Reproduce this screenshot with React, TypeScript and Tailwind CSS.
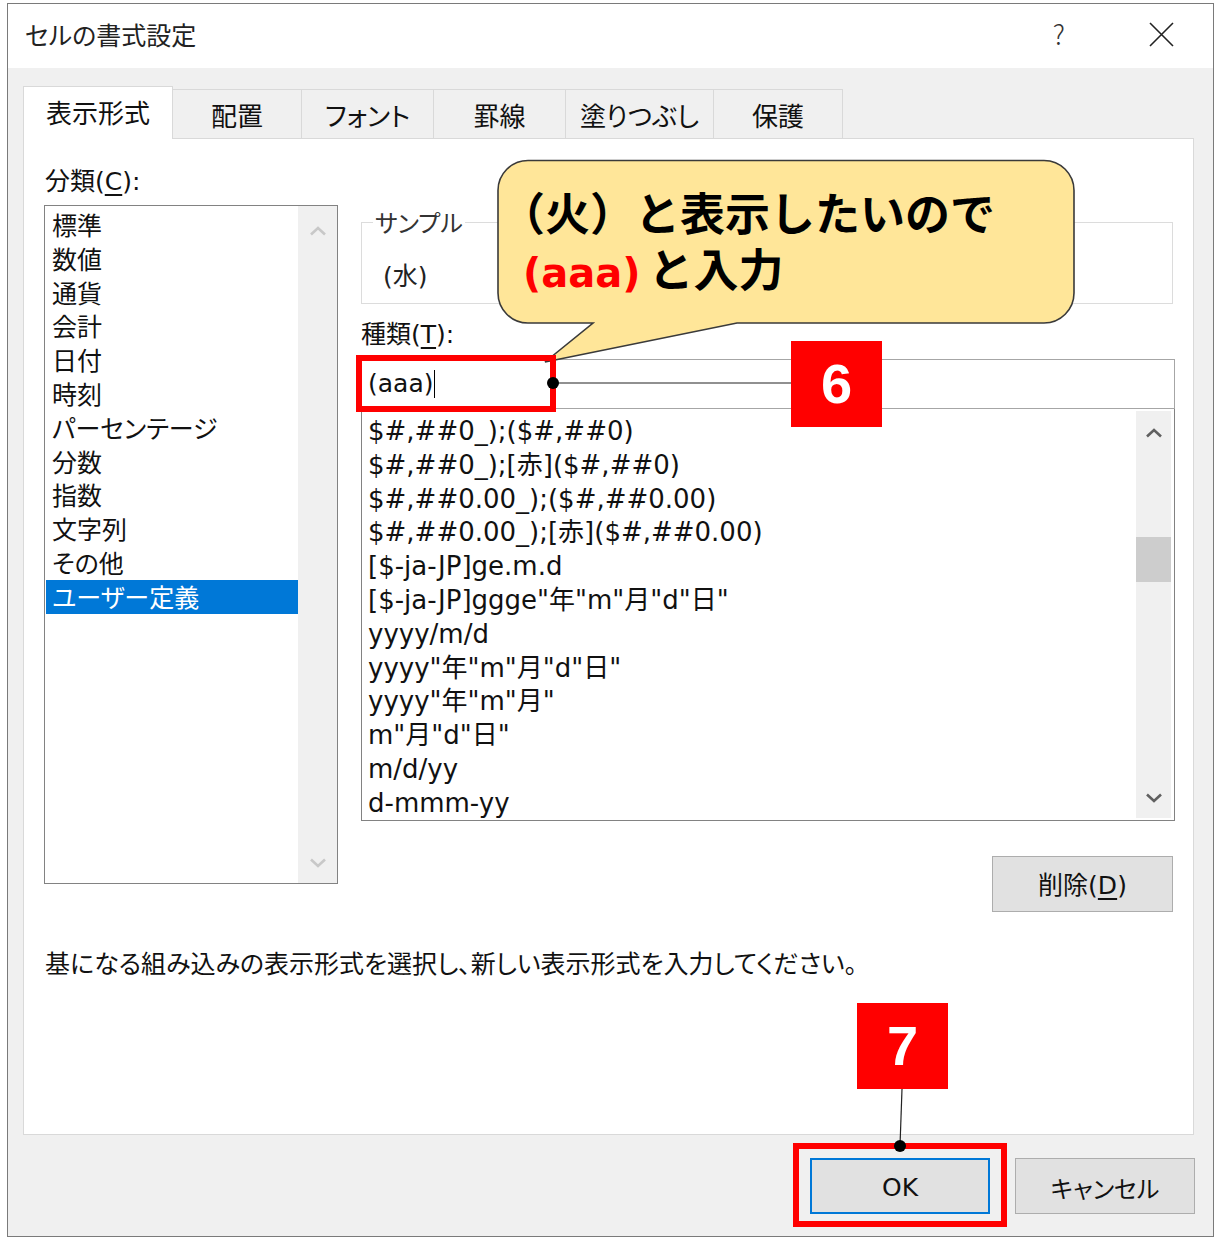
import React from "react";

const categories = ["標準", "数値", "通貨", "会計", "日付", "時刻", "パーセンテージ", "分数", "指数", "文字列", "その他", "ユーザー定義"];

const formats = [
  "$#,##0_);($#,##0)",
  "$#,##0_);[赤]($#,##0)",
  "$#,##0.00_);($#,##0.00)",
  "$#,##0.00_);[赤]($#,##0.00)",
  "[$-ja-JP]ge.m.d",
  '[$-ja-JP]ggge"年"m"月"d"日"',
  "yyyy/m/d",
  'yyyy"年"m"月"d"日"',
  'yyyy"年"m"月"',
  'm"月"d"日"',
  "m/d/yy",
  "d-mmm-yy",
];

const tabs = ["表示形式", "配置", "フォント", "罫線", "塗りつぶし", "保護"];
const tabWidths = ["w-[150px]", "w-[129px]", "w-[132px]", "w-[132px]", "w-[148px]", "w-[129px]"];

function Chevron({ up, color }: { up?: boolean; color: string }) {
  return (
    <svg width="18" height="10" viewBox="0 0 18 10">
      <path d={up ? "M2 8.5 L9 2 L16 8.5" : "M2 1.5 L9 8 L16 1.5"} fill="none" stroke={color} strokeWidth="2.6" />
    </svg>
  );
}

export default function App() {
  return (
    <div className="relative w-[1215px] h-[1240px] bg-white overflow-hidden text-[#111] font-['DejaVu_Sans','Noto_Sans_CJK_JP',sans-serif] [font-feature-settings:'palt']">
      <div className="ml-[7px] mt-[3px] w-[1207px] h-[1234px] border border-[#7a7a7a] bg-[#f0f0f0] flex flex-col">
        {/* Title bar */}
        <div className="h-[64px] bg-white flex items-center justify-between pl-[17px] pr-[39px] pb-[3px]">
          <span className="text-[25px] font-['Noto_Sans_CJK_JP',sans-serif] text-[#222]">セルの書式設定</span>
          <div className="flex items-center gap-[84px]">
            <span className="text-[27px] font-['Noto_Sans_CJK_JP',sans-serif] font-light text-[#333]">?</span>
            <svg width="25" height="25" viewBox="0 0 25 25">
              <path d="M1 1 L24 24 M24 1 L1 24" stroke="#222" strokeWidth="1.6" />
            </svg>
          </div>
        </div>

        {/* Body */}
        <div className="flex-1 pl-[15px] pr-[19px]">
          <div className="mt-[18px] flex items-end -mb-px relative z-10">
            {tabs.map((t, i) => (
              <div
                key={t}
                className={`${tabWidths[i]} flex items-center justify-center text-[26px] font-['Noto_Sans_CJK_JP',sans-serif] border-t border-r border-[#d9d9d9] ${
                  i === 0 ? "h-[53px] bg-white border-l pb-[3px]" : "h-[50px] bg-[#f0f0f0] border-b"
                }`}
              >
                {t}
              </div>
            ))}
          </div>

          {/* Panel */}
          <div className="h-[997px] border border-[#d9d9d9] bg-white pl-[20px]">
            <div className="flex">
              {/* Left column */}
              <div className="w-[294px]">
                <div className="mt-[26px] pl-[1px] leading-[34px] text-[25px]">
                  分類(<span className="underline underline-offset-4">C</span>):
                </div>
                <div className="mt-[6px] h-[679px] border border-[#828282] flex">
                  <div className="flex-1 pt-[2px] text-[25px] font-['Noto_Sans_CJK_JP',sans-serif]">
                    {categories.map((c) => (
                      <div
                        key={c}
                        className={`leading-[33.8px] ml-[1px] pl-[6px] ${c === "ユーザー定義" ? "bg-[#0078d7] text-white" : ""}`}
                      >
                        {c}
                      </div>
                    ))}
                  </div>
                  <div className="w-[39px] bg-[#f0f0f0] flex flex-col items-center justify-between pt-[20px] pb-[15px]">
                    <Chevron up color="#c8c8c8" />
                    <Chevron color="#c8c8c8" />
                  </div>
                </div>
              </div>

              {/* Right column */}
              <div className="ml-[23px] w-[814px] flex flex-col">
                <fieldset className="mt-[68px] w-[812px] border border-[#dcdcdc] p-0">
                  <legend className="ml-[11px] px-[2px] leading-[30px] text-[24px] font-['Noto_Sans_CJK_JP',sans-serif] text-[#333]">サンプル</legend>
                  <div className="h-[66px] pt-[23px] pl-[21px] leading-[34px] text-[25px] text-[#222]">(水)</div>
                </fieldset>

                <div className="mt-[14px] leading-[34px] text-[25px]">
                  種類(<span className="underline underline-offset-4">T</span>):
                </div>
                <div className="mt-[7px] h-[50px] border border-[#a6a6a6] flex items-center pl-[6px] text-[25px]">
                  <span>(aaa)</span>
                  <span className="ml-[1px] w-px h-[28px] bg-black" />
                </div>
                <div className="h-[412px] border border-t-0 border-[#828282] flex overflow-hidden">
                  <div className="flex-1 pt-[6px] pl-[6px] text-[26px] whitespace-nowrap">
                    {formats.map((f) => (
                      <div key={f} className="leading-[33.8px]">{f}</div>
                    ))}
                  </div>
                  <div className="w-[35px] mr-[3px] my-[2px] bg-[#f0f0f0] flex flex-col">
                    <div className="h-[44px] flex items-center justify-center">
                      <Chevron up color="#606060" />
                    </div>
                    <div className="h-[82px]" />
                    <div className="h-[45px] bg-[#cdcdcd]" />
                    <div className="flex-1" />
                    <div className="h-[40px] flex items-center justify-center">
                      <Chevron color="#606060" />
                    </div>
                  </div>
                </div>

                <div className="mt-[35px] self-end mr-[2px] w-[181px] h-[56px] bg-[#e1e1e1] border border-[#adadad] flex items-center justify-center pt-[3px] text-[25px]">
                  削除(<span className="underline underline-offset-4">D</span>)
                </div>
              </div>
            </div>

            <div className="mt-[33px] pl-[1px] leading-[34px] text-[25px] font-['Noto_Sans_CJK_JP',sans-serif]">
              基になる組み込みの表示形式を選択し、新しい表示形式を入力してください。
            </div>
          </div>

          {/* Buttons */}
          <div className="mt-[23px] -mr-px flex justify-end gap-[25px]">
            <div className="w-[180px] h-[56px] bg-[#e1e1e1] border-2 border-[#0078d7] flex items-center justify-center pt-[3px] text-[25px]">OK</div>
            <div className="w-[180px] h-[56px] bg-[#e1e1e1] border border-[#adadad] flex items-center justify-center pt-[3px] text-[24px] font-['Noto_Sans_CJK_JP',sans-serif]">キャンセル</div>
          </div>
        </div>
      </div>

      {/* Callout */}
      <svg className="absolute left-[496px] top-[159px]" width="582" height="206" viewBox="0 0 582 206">
        <path
          d="M32 1.5 H548 A30 30 0 0 1 578 31.5 V134 A30 30 0 0 1 548 164 H241 L49 203 L97 164 H32 A30 30 0 0 1 2 134 V31.5 A30 30 0 0 1 32 1.5 Z"
          fill="#ffe699"
          stroke="#3a3a3a"
          strokeWidth="1.6"
        />
      </svg>
      <div className="absolute left-[500px] top-[184px] leading-[56px] text-[45px] font-bold font-['Noto_Sans_CJK_JP',sans-serif] [font-feature-settings:normal] text-black">
        <div>（火）と表示したいので</div>
        <div className="flex items-baseline">
          <span className="ml-[23px] text-[#ff0000] font-['DejaVu_Sans',sans-serif] text-[40px]">(aaa)</span>
          <span className="ml-[8px]">と入力</span>
        </div>
      </div>

      {/* Red highlights */}
      <div className="absolute left-[356px] top-[355px] w-[200px] h-[57px] border-[6px] border-[#ff0000]" />
      <div className="absolute left-[793px] top-[1143px] w-[214px] h-[84px] border-[6px] border-[#ff0000]" />

      {/* Connectors */}
      <svg className="absolute left-0 top-0 pointer-events-none" width="1215" height="1240">
        <line x1="553" y1="383" x2="792" y2="383" stroke="#222" strokeWidth="1.2" />
        <circle cx="553" cy="383" r="6" fill="#000" />
        <line x1="902" y1="1089" x2="900" y2="1146" stroke="#222" strokeWidth="1.2" />
        <circle cx="900" cy="1146" r="6" fill="#000" />
      </svg>

      {/* Step badges */}
      <div className="absolute left-[791px] top-[341px] w-[91px] h-[86px] bg-[#ff0000] flex items-center justify-center text-white text-[56px] font-bold font-['Liberation_Sans',sans-serif]">6</div>
      <div className="absolute left-[857px] top-[1003px] w-[91px] h-[86px] bg-[#ff0000] flex items-center justify-center text-white text-[56px] font-bold font-['Liberation_Sans',sans-serif]">7</div>
    </div>
  );
}
